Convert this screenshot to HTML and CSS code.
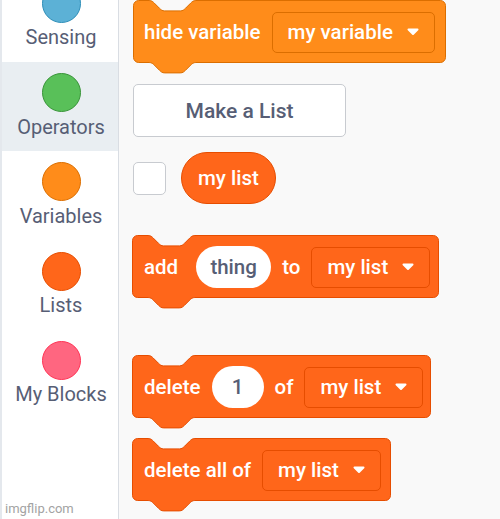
FILE: index.html
```html
<!DOCTYPE html>
<html>
<head>
<meta charset="utf-8">
<link rel="stylesheet" href="styles.css">
</head>
<body>
<div class="app">
  <nav class="sidebar">
    <div class="cats">
      <div class="cat"><span class="dot sensing"></span><span class="label">Sensing</span></div>
      <div class="cat selected"><span class="dot operators"></span><span class="label">Operators</span></div>
      <div class="cat"><span class="dot variables"></span><span class="label">Variables</span></div>
      <div class="cat"><span class="dot lists"></span><span class="label">Lists</span></div>
      <div class="cat"><span class="dot myblocks"></span><span class="label">My Blocks</span></div>
    </div>
  </nav>
  <main class="flyout">
    <div class="block var b-hide">
      <svg class="shape" width="316" height="78"><path transform="translate(0.5,0.5)" d="M0,5.2 A5.2,5.2 0 0 1 5.2,0 H15.6 c2.6,0 3.9,1.3 5.2,2.6 l5.2,5.2 c1.3,1.3 2.6,2.6 5.2,2.6 h15.6 c2.6,0 3.9,-1.3 5.2,-2.6 l5.2,-5.2 c1.3,-1.3 2.6,-2.6 5.2,-2.6 H306.8 a5.2,5.2 0 0 1 5.2,5.2 V56.8 a5.2,5.2 0 0 1 -5.2,5.2 H62.4 c-2.6,0 -3.9,1.3 -5.2,2.6 l-5.2,5.2 c-1.3,1.3 -2.6,2.6 -5.2,2.6 h-15.6 c-2.6,0 -3.9,-1.3 -5.2,-2.6 l-5.2,-5.2 c-1.3,-1.3 -2.6,-2.6 -5.2,-2.6 H5.2 a5.2,5.2 0 0 1 -5.2,-5.2 Z"/></svg>
      <span class="txt">hide variable</span>
      <span class="dd w-var">my variable<svg class="arrow" width="14" height="8" viewBox="0 0 14 8"><path d="M2.5,1.5 H11.5 L7,6 Z"/></svg></span>
    </div>

    <div class="make-btn">Make a List</div>

    <div class="reporter-row">
      <span class="checkbox"></span>
      <span class="reporter">my list</span>
    </div>

    <div class="block list b-add">
      <svg class="shape" width="310" height="78"><path transform="translate(0.5,0.5)" d="M0,5.2 A5.2,5.2 0 0 1 5.2,0 H15.6 c2.6,0 3.9,1.3 5.2,2.6 l5.2,5.2 c1.3,1.3 2.6,2.6 5.2,2.6 h15.6 c2.6,0 3.9,-1.3 5.2,-2.6 l5.2,-5.2 c1.3,-1.3 2.6,-2.6 5.2,-2.6 H300.8 a5.2,5.2 0 0 1 5.2,5.2 V56.8 a5.2,5.2 0 0 1 -5.2,5.2 H62.4 c-2.6,0 -3.9,1.3 -5.2,2.6 l-5.2,5.2 c-1.3,1.3 -2.6,2.6 -5.2,2.6 h-15.6 c-2.6,0 -3.9,-1.3 -5.2,-2.6 l-5.2,-5.2 c-1.3,-1.3 -2.6,-2.6 -5.2,-2.6 H5.2 a5.2,5.2 0 0 1 -5.2,-5.2 Z"/></svg>
      <span class="txt add-label">add</span>
      <span class="oval o-thing">thing</span>
      <span class="txt">to</span>
      <span class="dd w-add">my list<svg class="arrow" width="14" height="8" viewBox="0 0 14 8"><path d="M2.5,1.5 H11.5 L7,6 Z"/></svg></span>
    </div>

    <div class="block list b-del">
      <svg class="shape" width="302" height="78"><path transform="translate(0.5,0.5)" d="M0,5.2 A5.2,5.2 0 0 1 5.2,0 H15.6 c2.6,0 3.9,1.3 5.2,2.6 l5.2,5.2 c1.3,1.3 2.6,2.6 5.2,2.6 h15.6 c2.6,0 3.9,-1.3 5.2,-2.6 l5.2,-5.2 c1.3,-1.3 2.6,-2.6 5.2,-2.6 H292.8 a5.2,5.2 0 0 1 5.2,5.2 V56.8 a5.2,5.2 0 0 1 -5.2,5.2 H62.4 c-2.6,0 -3.9,1.3 -5.2,2.6 l-5.2,5.2 c-1.3,1.3 -2.6,2.6 -5.2,2.6 h-15.6 c-2.6,0 -3.9,-1.3 -5.2,-2.6 l-5.2,-5.2 c-1.3,-1.3 -2.6,-2.6 -5.2,-2.6 H5.2 a5.2,5.2 0 0 1 -5.2,-5.2 Z"/></svg>
      <span class="txt">delete</span>
      <span class="oval o-num">1</span>
      <span class="txt">of</span>
      <span class="dd w-del">my list<svg class="arrow" width="14" height="8" viewBox="0 0 14 8"><path d="M2.5,1.5 H11.5 L7,6 Z"/></svg></span>
    </div>

    <div class="block list b-delall">
      <svg class="shape" width="262" height="78"><path transform="translate(0.5,0.5)" d="M0,5.2 A5.2,5.2 0 0 1 5.2,0 H15.6 c2.6,0 3.9,1.3 5.2,2.6 l5.2,5.2 c1.3,1.3 2.6,2.6 5.2,2.6 h15.6 c2.6,0 3.9,-1.3 5.2,-2.6 l5.2,-5.2 c1.3,-1.3 2.6,-2.6 5.2,-2.6 H252.8 a5.2,5.2 0 0 1 5.2,5.2 V56.8 a5.2,5.2 0 0 1 -5.2,5.2 H62.4 c-2.6,0 -3.9,1.3 -5.2,2.6 l-5.2,5.2 c-1.3,1.3 -2.6,2.6 -5.2,2.6 h-15.6 c-2.6,0 -3.9,-1.3 -5.2,-2.6 l-5.2,-5.2 c-1.3,-1.3 -2.6,-2.6 -5.2,-2.6 H5.2 a5.2,5.2 0 0 1 -5.2,-5.2 Z"/></svg>
      <span class="txt">delete all of</span>
      <span class="dd w-delall">my list<svg class="arrow" width="14" height="8" viewBox="0 0 14 8"><path d="M2.5,1.5 H11.5 L7,6 Z"/></svg></span>
    </div>
  </main>
  <div class="watermark">imgflip.com</div>
</div>
</body>
</html>
```

FILE: styles.css
```css
html, body {
  margin: 0;
  padding: 0;
}
body {
  width: 500px;
  height: 519px;
  overflow: hidden;
  font-family: Roboto, "Liberation Sans", sans-serif;
}
.app {
  position: relative;
  display: flex;
  height: 519px;
  background: #f9f9f9;
}
.sidebar {
  width: 116px;
  flex: none;
  background: #ffffff;
  border-left: 2px solid #e4e8ed;
  border-right: 1px solid #d9dde3;
  overflow: hidden;
}
.cats {
  margin-top: -27.33px;
  display: flex;
  flex-direction: column;
}
.cat {
  height: 89.33px;
  box-sizing: border-box;
  padding-top: 11px;
  display: flex;
  flex-direction: column;
  align-items: center;
}
.cat.selected {
  background: #e9eef2;
}
.dot {
  width: 37px;
  height: 37px;
  border-radius: 50%;
  border: 1px solid;
  margin-right: -2px;
}
.sensing { background: #5cb1d6; border-color: #2e8eb8; }
.operators { background: #59c059; border-color: #389438; }
.variables { background: #ff8c1a; border-color: #db6e00; }
.lists { background: #ff661a; border-color: #e64d00; }
.myblocks { background: #ff6680; border-color: #ff3355; }
.label {
  margin-top: 2.5px;
  margin-right: -2px;
  font-size: 20px;
  line-height: 24px;
  color: #575e75;
  white-space: nowrap;
}
.flyout {
  flex: 1;
  padding-left: 13px;
  display: flex;
  flex-direction: column;
  align-items: flex-start;
}
.block {
  position: relative;
  display: flex;
  align-items: center;
  height: 63px;
  box-sizing: border-box;
  padding-left: 12px;
  gap: 11px;
}
.shape {
  position: absolute;
  left: 0;
  top: 0;
  overflow: visible;
}
.shape path {
  stroke-width: 1;
}
.var .shape path { fill: #ff8c1a; stroke: #db6e00; }
.list .shape path { fill: #ff661a; stroke: #e64d00; }
.txt, .dd, .oval {
  position: relative;
  font-size: 20.5px;
  font-weight: 500;
  line-height: 24px;
  white-space: nowrap;
}
.txt { color: #ffffff; }
.b-hide { width: 313px; margin-left: 1px; padding-left: 11px; margin-top: 0; }
.b-add { width: 307px; margin-top: 31px; }
.b-del { width: 299px; margin-top: 57px; }
.b-delall { width: 259px; margin-top: 20px; }
.dd {
  display: flex;
  align-items: center;
  gap: 13px;
  height: 41px;
  box-sizing: border-box;
  padding: 0 14px 0 15px;
  border-radius: 5px;
  color: #ffffff;
  margin-top: 1px;
}
.var .dd { background: #ff8c1a; border: 1px solid #db6e00; }
.list .dd { background: #ff661a; border: 1px solid #e64d00; }
.arrow path {
  fill: #ffffff;
  stroke: #ffffff;
  stroke-width: 2;
  stroke-linejoin: round;
}
.oval {
  display: flex;
  align-items: center;
  justify-content: center;
  height: 42px;
  border-radius: 21px;
  background: #ffffff;
  color: #575e75;
  font-weight: 500;
}
.o-thing { width: 75px; }
.o-num { width: 52px; }
.add-label { margin-right: 7px; }
.make-btn {
  margin-top: 21px;
  margin-left: 1px;
  width: 213px;
  height: 53px;
  box-sizing: border-box;
  border: 1px solid #c8cbd0;
  border-radius: 5px;
  background: #ffffff;
  display: flex;
  align-items: center;
  justify-content: center;
  font-size: 21px;
  font-weight: 500;
  color: #575e75;
}
.reporter-row {
  margin-top: 15px;
  margin-left: 1px;
  display: flex;
  align-items: center;
  gap: 15px;
}
.checkbox {
  width: 33px;
  height: 33px;
  box-sizing: border-box;
  border: 1px solid #c8cbd0;
  border-radius: 5px;
  background: #ffffff;
}
.reporter {
  height: 52px;
  box-sizing: border-box;
  padding: 0 16px;
  border-radius: 26px;
  background: #ff661a;
  border: 1px solid #e64d00;
  color: #ffffff;
  font-size: 20.5px;
  font-weight: 500;
  display: flex;
  align-items: center;
}
.watermark {
  position: absolute;
  left: 5px;
  bottom: 3px;
  font-size: 13px;
  color: #a3a3a3;
}
```
